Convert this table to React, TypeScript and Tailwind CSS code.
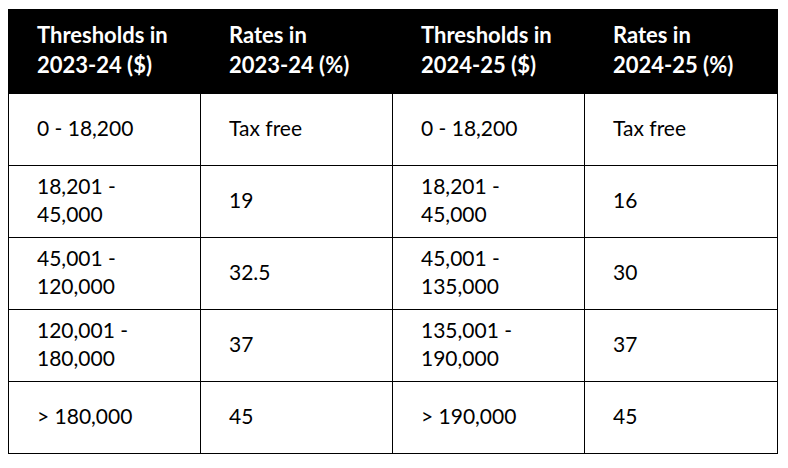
import React from "react";

const headers = [
  ["Thresholds in", "2023-24 ($)"],
  ["Rates in", "2023-24 (%)"],
  ["Thresholds in", "2024-25 ($)"],
  ["Rates in", "2024-25 (%)"],
];

const rows: string[][][] = [
  [["0 - 18,200"], ["Tax free"], ["0 - 18,200"], ["Tax free"]],
  [["18,201 -", "45,000"], ["19"], ["18,201 -", "45,000"], ["16"]],
  [["45,001 -", "120,000"], ["32.5"], ["45,001 -", "135,000"], ["30"]],
  [["120,001 -", "180,000"], ["37"], ["135,001 -", "190,000"], ["37"]],
  [["> 180,000"], ["45"], ["> 190,000"], ["45"]],
];

export default function App() {
  return (
    <div className="w-[788px] h-[468px] bg-white pt-[9px] pl-[8px]" style={{ fontFamily: "Lato, 'Noto Sans', sans-serif" }}>
      <table className="border-collapse w-[769px] table-fixed text-black">
        <colgroup>
          <col className="w-[192px]" />
          <col className="w-[192px]" />
          <col className="w-[192px]" />
          <col className="w-[193px]" />
        </colgroup>
        <thead>
          <tr className="bg-black h-[84px]">
            {headers.map((h, i) => (
              <th key={i} className="text-left align-middle pl-[28px] pb-[3px] text-white font-bold text-[22px] leading-[30px] border border-black">
                {h.map((l, j) => (
                  <div key={j}>{l}</div>
                ))}
              </th>
            ))}
          </tr>
        </thead>
        <tbody>
          {rows.map((r, i) => (
            <tr key={i} className="h-[72px]">
              {r.map((c, j) => (
                <td key={j} className="border border-black pl-[28px] pb-[4px] align-middle text-[21px] leading-[28px]">
                  {c.map((l, k) => (
                    <div key={k}>{l}</div>
                  ))}
                </td>
              ))}
            </tr>
          ))}
        </tbody>
      </table>
    </div>
  );
}
